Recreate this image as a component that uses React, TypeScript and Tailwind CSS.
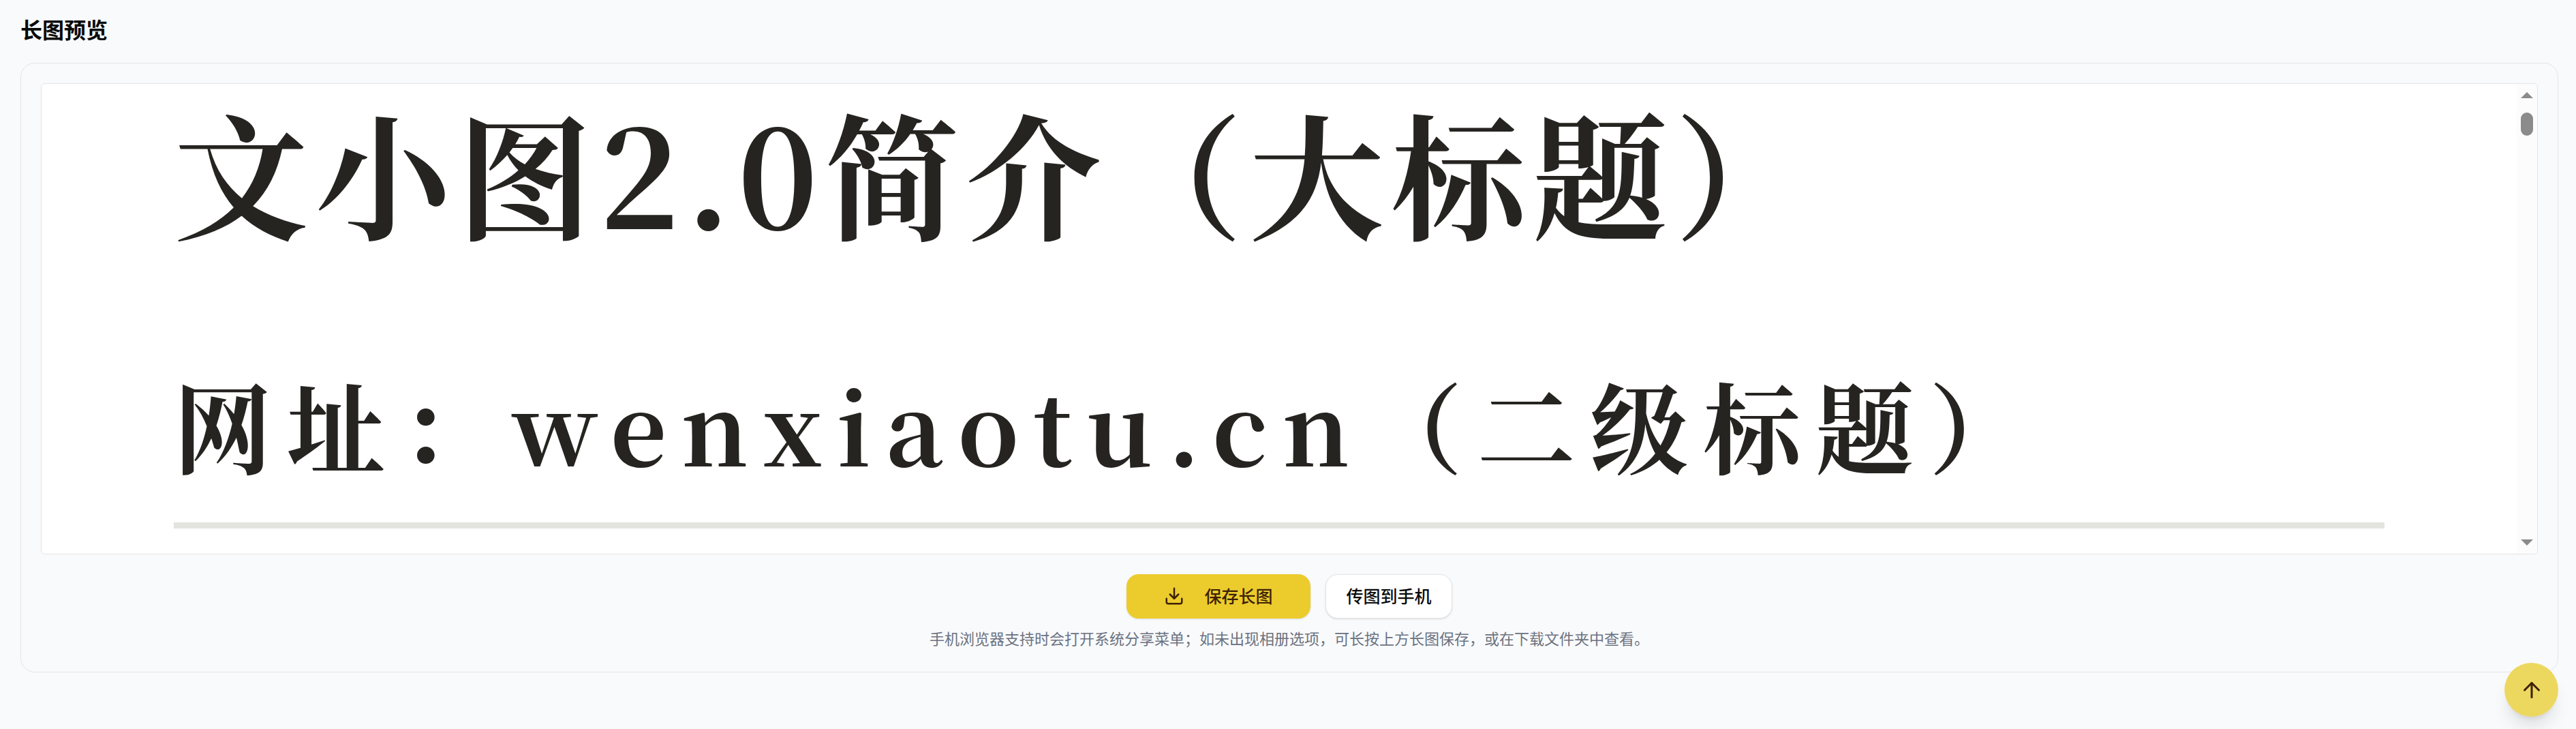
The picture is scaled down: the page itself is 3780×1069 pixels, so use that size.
import { ArrowUp, Download } from "lucide-react";


function ScrollTrack(){
    return (
        <div aria-hidden="true" className="flex w-[30px] shrink-0 flex-col items-center rounded-r-md bg-[#fcfcfc] py-3">
            <svg className="h-[9px] w-[18px]" viewBox="0 0 18 9" fill="#8b8b8b">
                <path d="M9 0 18 9H0z" />
            </svg>
            <div className="mt-[21px] h-[34px] w-[18px] rounded-full bg-[#8b8b8b]" />
            <svg className="mt-auto h-[9px] w-[18px]" viewBox="0 0 18 9" fill="#8b8b8b">
                <path d="M0 0H18L9 9z" />
            </svg>
        </div>
    )
}


export default function App(){
    const scrollToTop = () => {
        window.scrollTo({ top: 0, behavior: "smooth" });
    }

    return (
        <main className="min-h-screen bg-[#f9fafc] pt-4 pr-[26px] pb-5 pl-[30px] font-['Noto_Sans_CJK_SC',sans-serif] text-[#0a0a0a]">
            <h2 className="text-[32px] leading-[52px] font-bold">长图预览</h2>

            <section className="mt-6 rounded-[21px] border border-[#e5e5e5] p-[29px] pb-8">
                {/* Long image preview */}
                <div className="flex h-[691px] rounded-md border border-[#e5e5e5] bg-white">
                    <article className="min-w-0 flex-1 pt-2 pr-[194px] pl-[194px] font-['Noto_Serif_CJK_SC','Liberation_Serif','Noto_Sans_CJK_SC',serif] font-bold whitespace-nowrap text-[#262421]">
                        <h1 className="text-[198px] leading-[240px] tracking-wider">文小图2.0简介（大标题）</h1>
                        <div className="mt-[151px] border-b-9 border-[#e4e4df] pb-[44px]">
                            <h2 className="text-[144px] leading-[200px] tracking-[0.15em]">网址：wenxiaotu.cn（二级标题）</h2>
                        </div>
                    </article>
                    <ScrollTrack/>
                </div>

                <div className="mt-[29px] flex justify-center gap-[22px]">
                    <button type="button" className="flex h-[65px] w-[270px] items-center justify-center gap-[29px] rounded-[18px] bg-[#eccc2c] pb-[2px] text-[25px] font-medium text-[#3d2106] shadow-sm">
                        <Download size={30} /> 保存长图
                    </button>
                    <button type="button" className="h-[65px] w-[186px] rounded-[18px] border border-[#e5e5e5] bg-white pb-[2px] text-[25px] font-medium shadow-sm">
                        传图到手机
                    </button>
                </div>

                <p className="mt-[10px] text-center text-[22px] leading-9 text-[#6b7280]">
                    手机浏览器支持时会打开系统分享菜单；如未出现相册选项，可长按上方长图保存，或在下载文件夹中查看。
                </p>
            </section>

            <button
                type="button"
                aria-label="返回顶部"
                onClick={scrollToTop}
                className="fixed right-[26px] bottom-[18px] flex size-[79px] items-center justify-center rounded-full bg-[#edd85f] text-[#3d2106] shadow-xl"
            >
                <ArrowUp size={36} />
            </button>
        </main>
    )
}
